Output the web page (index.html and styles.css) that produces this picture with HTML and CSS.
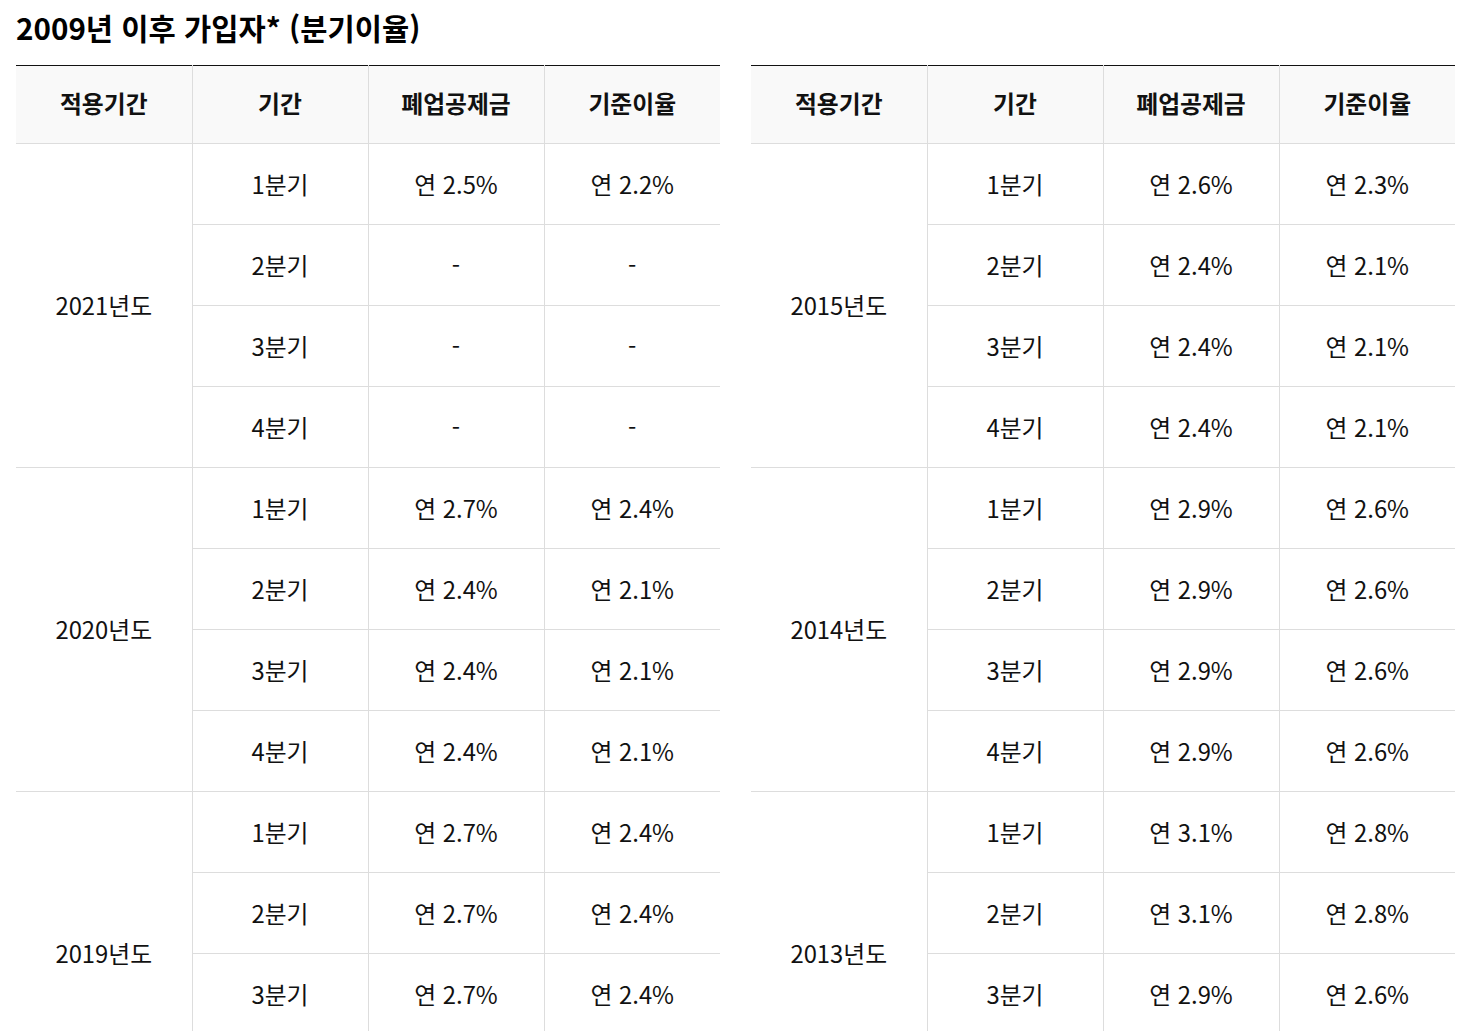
FILE: index.html
```html
<!DOCTYPE html>
<html lang="ko">
<head>
<meta charset="utf-8">
<link rel="stylesheet" href="styles.css">
</head>
<body>
<h2 class="title">2009년 이후 가입자* (분기이율)</h2>
<div class="tables">
  <table class="rate">
    <thead>
      <tr><th>적용기간</th><th>기간</th><th>폐업공제금</th><th>기준이율</th></tr>
    </thead>
    <tbody>
      <tr><td rowspan="4" class="year">2021년도</td><td>1분기</td><td>연 2.5%</td><td>연 2.2%</td></tr>
      <tr><td>2분기</td><td>-</td><td>-</td></tr>
      <tr><td>3분기</td><td>-</td><td>-</td></tr>
      <tr><td>4분기</td><td>-</td><td>-</td></tr>
      <tr><td rowspan="4" class="year">2020년도</td><td>1분기</td><td>연 2.7%</td><td>연 2.4%</td></tr>
      <tr><td>2분기</td><td>연 2.4%</td><td>연 2.1%</td></tr>
      <tr><td>3분기</td><td>연 2.4%</td><td>연 2.1%</td></tr>
      <tr><td>4분기</td><td>연 2.4%</td><td>연 2.1%</td></tr>
      <tr><td rowspan="4" class="year">2019년도</td><td>1분기</td><td>연 2.7%</td><td>연 2.4%</td></tr>
      <tr><td>2분기</td><td>연 2.7%</td><td>연 2.4%</td></tr>
      <tr><td>3분기</td><td>연 2.7%</td><td>연 2.4%</td></tr>
      <tr><td>4분기</td><td>연 2.4%</td><td>연 2.1%</td></tr>
    </tbody>
  </table>
  <table class="rate">
    <thead>
      <tr><th>적용기간</th><th>기간</th><th>폐업공제금</th><th>기준이율</th></tr>
    </thead>
    <tbody>
      <tr><td rowspan="4" class="year">2015년도</td><td>1분기</td><td>연 2.6%</td><td>연 2.3%</td></tr>
      <tr><td>2분기</td><td>연 2.4%</td><td>연 2.1%</td></tr>
      <tr><td>3분기</td><td>연 2.4%</td><td>연 2.1%</td></tr>
      <tr><td>4분기</td><td>연 2.4%</td><td>연 2.1%</td></tr>
      <tr><td rowspan="4" class="year">2014년도</td><td>1분기</td><td>연 2.9%</td><td>연 2.6%</td></tr>
      <tr><td>2분기</td><td>연 2.9%</td><td>연 2.6%</td></tr>
      <tr><td>3분기</td><td>연 2.9%</td><td>연 2.6%</td></tr>
      <tr><td>4분기</td><td>연 2.9%</td><td>연 2.6%</td></tr>
      <tr><td rowspan="4" class="year">2013년도</td><td>1분기</td><td>연 3.1%</td><td>연 2.8%</td></tr>
      <tr><td>2분기</td><td>연 3.1%</td><td>연 2.8%</td></tr>
      <tr><td>3분기</td><td>연 2.9%</td><td>연 2.6%</td></tr>
      <tr><td>4분기</td><td>연 2.9%</td><td>연 2.6%</td></tr>
    </tbody>
  </table>
</div>
</body>
</html>
```

FILE: styles.css
```css
html, body {
  margin: 0;
  padding: 0;
  background: #fff;
}
body {
  font-family: "Noto Sans CJK KR", "Noto Sans", sans-serif;
  color: #111;
  padding: 0 9px 0 16px;
}
.title {
  margin: 0;
  padding-top: 8px;
  height: 65px;
  box-sizing: border-box;
  font-size: 29.6px;
  line-height: 40px;
  font-weight: 700;
  color: #000;
}
.tables {
  display: flex;
  gap: 31px;
  align-items: flex-start;
}
.rate {
  width: 704px;
  flex: 0 0 704px;
  border-collapse: collapse;
  table-layout: fixed;
  border-top: 1px solid #111;
}
.rate th, .rate td {
  text-align: center;
  padding: 0;
  font-size: 23.8px;
  color: #111;
  border-bottom: 1px solid #ddd;
  border-left: 1px solid #ddd;
}
.rate th:first-child, .rate td.year {
  border-left: none;
}
.rate th {
  height: 73px;
  padding-bottom: 4px;
  background: #f9f9f9;
  font-weight: 700;
}
.rate td {
  height: 78px;
  padding-bottom: 2px;
}
```
